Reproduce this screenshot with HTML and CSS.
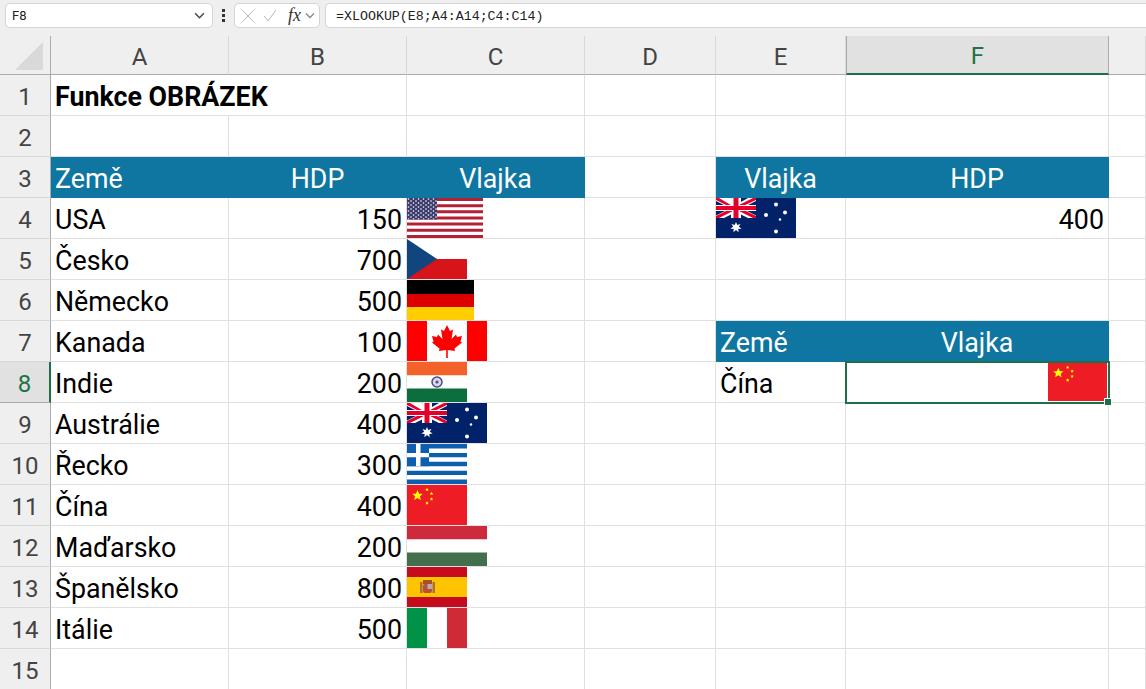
FILE: index.html
```html
<!DOCTYPE html>
<html lang="cs">

<head>
    <meta charset="utf-8">
    <meta name="viewport" content="width=device-width, initial-scale=1.0">
    <title>Funkce OBRÁZEK</title>
    <link rel="stylesheet" href="styles.css">
</head>

<body>
    <!-- flags used more than once -->
    <svg class="defs" aria-hidden="true">
        <symbol id="star" viewBox="-10 -10 20 20">
            <polygon points="0,-10 2.9,-3.1 9.5,-3.1 4.5,1.5 5.9,8.1 0,4.5 -5.9,8.1 -4.5,1.5 -9.5,-3.1 -2.9,-3.1" fill="#ffff00" />
        </symbol>
        <symbol id="au" viewBox="0 0 80 40" preserveAspectRatio="none">
            <rect width="80" height="40" fill="#012169" />
            <rect width="40" height="20" fill="#fff" />
            <path d="M3 0H0V2L15 9.500H19ZM37 0L21 8V9.500H24L40 2V0ZM0 18V20H3L19 12V10.500H15ZM40 18L25 10.500H21V12L37 20H40Z" fill="#e4002b" />
            <path d="M8 0H15L20 2.500V0H20ZM0 3L11 8.500H0ZM40 3V8.500H29ZM32 0H25V4ZM0 12H11L0 17.500ZM40 12V17.500L29 12ZM15 20H8L15 16.500ZM25 20V16.500L32 20Z" fill="#012169" />
            <rect x="16" width="8" height="20" fill="#fff" />
            <rect y="7" width="40" height="6" fill="#fff" />
            <rect x="17.500" width="5" height="20" fill="#e4002b" />
            <rect y="8" width="40" height="4" fill="#e4002b" />
            <polygon points="20,24 21.300,27 24.500,25.900 22.800,28.800 25.700,30.500 22.300,31 22.600,34.300 20,32 17.400,34.300 17.700,31 14.300,30.500 17.200,28.800 15.500,25.900 18.700,27" fill="#fff" />
            <circle cx="60" cy="6.500" r="2" fill="#fff" />
            <circle cx="50" cy="17" r="2" fill="#fff" />
            <circle cx="69" cy="14.500" r="2" fill="#fff" />
            <circle cx="64" cy="21.500" r="1.200" fill="#fff" />
            <circle cx="60" cy="33.500" r="2" fill="#fff" />
        </symbol>
        <symbol id="cn" viewBox="0 0 60 40" preserveAspectRatio="none">
            <rect width="60" height="40" fill="#ee1c25" />
            <use href="#star" x="5" y="5" width="11" height="11" />
            <use href="#star" x="18" y="2.500" width="4" height="4" />
            <use href="#star" x="22.500" y="6.500" width="4" height="4" />
            <use href="#star" x="22.500" y="12" width="4" height="4" />
            <use href="#star" x="18" y="16" width="4" height="4" />
        </symbol>
    </svg>

    <div class="formula-bar">
        <div class="name-box">
            <span>F8</span>
            <svg class="chevron" viewBox="0 0 10 6"><path d="M1 1l4 4 4-4" /></svg>
        </div>
        <div class="grip"><i></i><i></i><i></i></div>
        <div class="fx-box">
            <svg class="fx-icon" viewBox="0 0 14 14"><path d="M1 1l12 12M13 1L1 13" /></svg>
            <svg class="fx-icon" viewBox="0 0 14 14"><path d="M1 7l4 5 8-11" /></svg>
            <span class="fx">fx</span>
            <svg class="chevron small" viewBox="0 0 10 6"><path d="M1 1l4 4 4-4" /></svg>
        </div>
        <div class="formula">=XLOOKUP(E8;A4:A14;C4:C14)</div>
    </div>

    <table class="sheet">
        <colgroup>
            <col class="c-row"><col class="c-abc"><col class="c-abc"><col class="c-abc">
            <col class="c-d"><col class="c-e"><col class="c-f"><col class="c-g">
        </colgroup>
        <thead>
            <tr>
                <th class="corner"><span class="triangle"></span></th>
                <th>A</th><th>B</th><th>C</th><th>D</th><th>E</th><th class="active">F</th><th></th>
            </tr>
        </thead>
        <tbody>
            <tr><th>1</th><td class="title" colspan="2">Funkce OBRÁZEK</td><td></td><td></td><td></td><td></td><td></td></tr>
            <tr><th>2</th><td></td><td></td><td></td><td></td><td></td><td></td><td></td></tr>
            <tr><th>3</th><td class="head">Země</td><td class="head mid">HDP</td><td class="head mid">Vlajka</td><td></td><td class="head mid">Vlajka</td><td class="head mid">HDP</td><td></td></tr>
            <tr>
                <th>4</th><td>USA</td><td class="num">150</td>
                <td class="pic">
                    <svg class="flag w76" viewBox="0 0 76 40" preserveAspectRatio="none">
                        <defs>
                            <pattern id="dots" width="5" height="4" patternUnits="userSpaceOnUse"><circle cx="1.500" cy="1" r=".8" fill="#fff" /><circle cx="4" cy="3" r=".8" fill="#fff" /></pattern>
                        </defs>
                        <rect width="76" height="40" fill="#fff" />
                        <path d="M0 0h76v3H0zM0 6.200h76v3H0zM0 12.300h76v3H0zM0 18.500h76v3H0zM0 24.600h76v3H0zM0 30.800h76v3H0zM0 36.900h76V40H0z" fill="#b22234" />
                        <rect width="30" height="21.500" fill="#3c3b6e" />
                        <rect width="30" height="21.500" fill="url(#dots)" />
                    </svg>
                </td>
                <td></td>
                <td class="pic"><svg class="flag w80"><use href="#au" width="80" height="40" /></svg></td>
                <td class="num">400</td><td></td>
            </tr>
            <tr>
                <th>5</th><td>Česko</td><td class="num">700</td>
                <td class="pic">
                    <svg class="flag w60" viewBox="0 0 60 40" preserveAspectRatio="none">
                        <rect width="60" height="20" fill="#fff" />
                        <rect y="20" width="60" height="20" fill="#d7141a" />
                        <polygon points="0,0 30,20 0,40" fill="#11457e" />
                    </svg>
                </td>
                <td></td><td></td><td></td><td></td>
            </tr>
            <tr>
                <th>6</th><td>Německo</td><td class="num">500</td>
                <td class="pic">
                    <svg class="flag w67" viewBox="0 0 67 40" preserveAspectRatio="none">
                        <rect width="67" height="14" fill="#000" />
                        <rect y="14" width="67" height="13" fill="#dd0000" />
                        <rect y="27" width="67" height="13" fill="#ffce00" />
                    </svg>
                </td>
                <td></td><td></td><td></td><td></td>
            </tr>
            <tr>
                <th>7</th><td>Kanada</td><td class="num">100</td>
                <td class="pic">
                    <svg class="flag w80" viewBox="0 0 80 40" preserveAspectRatio="none">
                        <rect width="80" height="40" fill="#f00" />
                        <rect x="20" width="40" height="40" fill="#fff" />
                        <polygon points="40,4 43,10 46,8.500 44.500,18 49,13.500 50,16 55,15 53.500,20.500 55,21.500 47.500,27.500 48,30 40.800,29 40.800,37 39.200,37 39.200,29 32,30 32.500,27.500 25,21.500 26.500,20.500 25,15 30,16 31,13.500 35.500,18 34,8.500 37,10" fill="#f00" />
                    </svg>
                </td>
                <td></td><td class="head">Země</td><td class="head mid">Vlajka</td><td></td>
            </tr>
            <tr>
                <th class="active">8</th><td>Indie</td><td class="num">200</td>
                <td class="pic">
                    <svg class="flag w60" viewBox="0 0 60 40" preserveAspectRatio="none">
                        <rect width="60" height="13.500" fill="#f4622b" />
                        <rect y="13.500" width="60" height="13" fill="#fff" />
                        <rect y="26.500" width="60" height="13.500" fill="#0b6e3c" />
                        <circle cx="30" cy="20" r="5" fill="#d8d8e8" stroke="#4a4a85" stroke-width="1.500" />
                        <circle cx="30" cy="20" r="1.500" fill="#4a4a85" />
                    </svg>
                </td>
                <td></td><td>Čína</td>
                <td class="selected">
                    <svg class="flag w60 sel-flag"><use href="#cn" width="59" height="38" /></svg>
                    <span class="handle"></span>
                </td>
                <td></td>
            </tr>
            <tr>
                <th>9</th><td>Austrálie</td><td class="num">400</td>
                <td class="pic"><svg class="flag w80"><use href="#au" width="80" height="40" /></svg></td>
                <td></td><td></td><td></td><td></td>
            </tr>
            <tr>
                <th>10</th><td>Řecko</td><td class="num">300</td>
                <td class="pic">
                    <svg class="flag w60" viewBox="0 0 60 40" preserveAspectRatio="none">
                        <rect width="60" height="40" fill="#0d5eaf" />
                        <path d="M0 4.400h60v4.500H0zM0 13.300h60v4.500H0zM0 22.200h60v4.500H0zM0 31.100h60v4.500H0z" fill="#fff" />
                        <rect width="22" height="22.200" fill="#0d5eaf" />
                        <path d="M9 0h4.500v22.200H9zM0 8.900h22v4.400H0z" fill="#fff" />
                    </svg>
                </td>
                <td></td><td></td><td></td><td></td>
            </tr>
            <tr>
                <th>11</th><td>Čína</td><td class="num">400</td>
                <td class="pic"><svg class="flag w60"><use href="#cn" width="60" height="40" /></svg></td>
                <td></td><td></td><td></td><td></td>
            </tr>
            <tr>
                <th>12</th><td>Maďarsko</td><td class="num">200</td>
                <td class="pic">
                    <svg class="flag w80" viewBox="0 0 80 40" preserveAspectRatio="none">
                        <rect width="80" height="13.500" fill="#cd2a3e" />
                        <rect y="13.500" width="80" height="13" fill="#fff" />
                        <rect y="26.500" width="80" height="13.500" fill="#436f4d" />
                    </svg>
                </td>
                <td></td><td></td><td></td><td></td>
            </tr>
            <tr>
                <th>13</th><td>Španělsko</td><td class="num">800</td>
                <td class="pic">
                    <svg class="flag w60" viewBox="0 0 60 40" preserveAspectRatio="none">
                        <rect width="60" height="40" fill="#c60b1e" />
                        <rect y="10" width="60" height="20" fill="#ffc400" />
                        <rect x="13" y="15" width="2.500" height="11" fill="#a8703c" />
                        <rect x="25.500" y="15" width="2.500" height="11" fill="#a8703c" />
                        <rect x="16" y="17" width="9" height="9" rx="2" fill="#b5503a" />
                        <rect x="20.500" y="17" width="4.500" height="5" fill="#b8a8b0" />
                        <rect x="16" y="13" width="9" height="4" fill="#a8502c" />
                    </svg>
                </td>
                <td></td><td></td><td></td><td></td>
            </tr>
            <tr>
                <th>14</th><td>Itálie</td><td class="num">500</td>
                <td class="pic">
                    <svg class="flag w60" viewBox="0 0 60 40" preserveAspectRatio="none">
                        <rect width="20" height="40" fill="#009246" />
                        <rect x="20" width="20" height="40" fill="#fff" />
                        <rect x="40" width="20" height="40" fill="#ce2b37" />
                    </svg>
                </td>
                <td></td><td></td><td></td><td></td>
            </tr>
            <tr><th>15</th><td></td><td></td><td></td><td></td><td></td><td></td><td></td></tr>
        </tbody>
    </table>
</body>

</html>
```

FILE: styles.css
```css
* {
    box-sizing: border-box;
}

html,
body {
    margin: 0;
    height: 689px;
    overflow: hidden;
    background: #fff;
}

body {
    font-family: "Roboto", "Liberation Sans", sans-serif;
    color: #000;
}

.defs {
    display: none;
}

/* formula bar */

.formula-bar {
    display: flex;
    align-items: stretch;
    height: 36px;
    padding: 3px 0 8px 5px;
    background: #efefef;
}

.name-box {
    display: flex;
    align-items: center;
    justify-content: space-between;
    width: 208px;
    padding: 0 7px 0 6px;
    background: #fff;
    border: 1px solid #d4d4d4;
    border-radius: 5px;
    font-size: 13px;
    color: #222;
}

.chevron {
    width: 11px;
    height: 7px;
    fill: none;
    stroke: #444;
    stroke-width: 1.300;
}

.chevron.small {
    width: 10px;
    stroke: #888;
}

.grip {
    display: flex;
    flex-direction: column;
    justify-content: center;
    gap: 2px;
    width: 21px;
    padding-left: 9px;
}

.grip i {
    display: block;
    width: 3px;
    height: 3px;
    background: #333;
}

.fx-box {
    display: flex;
    align-items: center;
    width: 86px;
    padding: 0 2px 0 6px;
    background: #fff;
    border: 1px solid #d4d4d4;
    border-radius: 5px;
}

.fx-icon {
    width: 14px;
    height: 14px;
    margin-right: 8px;
    fill: none;
    stroke: #b5b5b5;
    stroke-width: 1;
}

.fx {
    margin: 0 4px 0 3px;
    font-family: "Liberation Serif", serif;
    font-style: italic;
    font-size: 18px;
    color: #333;
}

.formula {
    flex: 1;
    margin-left: 5px;
    padding: 5px 0 0 10px;
    background: #fff;
    border: 1px solid #d4d4d4;
    border-right: 0;
    border-radius: 5px 0 0 5px;
    font-family: "Liberation Mono", monospace;
    font-size: 13.300px;
    color: #222;
}

/* sheet */

.sheet {
    width: 1146px;
    table-layout: fixed;
    border-collapse: separate;
    border-spacing: 0;
}

.c-row {
    width: 51px;
}

.c-abc {
    width: 178px;
}

.c-d {
    width: 131px;
}

.c-e {
    width: 130px;
}

.c-f {
    width: 263px;
}

.c-g {
    width: 37px;
}

th {
    padding: 0;
    background: #efefef;
    font-weight: 400;
    font-size: 24px;
    color: #444;
}

thead th {
    height: 39px;
    padding-top: 3px;
    border-bottom: 1px solid #ababab;
    border-right: 1px solid #d8d8d8;
}

tbody th {
    padding-top: 3px;
    border-right: 1px solid #ababab;
    border-bottom: 1px solid #d8d8d8;
}

thead .corner {
    position: relative;
    border-right-color: #ababab;
}

.triangle {
    position: absolute;
    right: 7px;
    bottom: 4px;
    border-style: solid;
    border-width: 0 0 28px 28px;
    border-color: transparent transparent #d9d9d9 transparent;
}

thead th.active {
    background: #e1e1e1;
    color: #217346;
    border-bottom: 2px solid #1e6f49;
    border-left: 1px solid #ababab;
    border-right-color: #ababab;
}

tbody th.active {
    background: #e1e1e1;
    color: #217346;
    border-right: 2px solid #1e6f49;
    border-bottom-color: #ababab;
}

td {
    height: 41px;
    padding: 3px 4px 0 4px;
    border-right: 1px solid #e0e0e0;
    border-bottom: 1px solid #e0e0e0;
    font-size: 26.800px;
    line-height: 36px;
    white-space: nowrap;
}

.title {
    font-weight: 700;
}

.head {
    background: #0e76a0;
    color: #fff;
    border-color: #0e76a0;
}

.mid {
    text-align: center;
}

.num {
    text-align: right;
}

.pic {
    padding: 0;
    vertical-align: top;
}

.flag {
    display: block;
    height: 40px;
}

.w60 {
    width: 60px;
}

.w67 {
    width: 67px;
}

.w76 {
    width: 76px;
}

.w80 {
    width: 80px;
}

.selected {
    position: relative;
    padding: 0;
    outline: 2px solid #1e6f49;
    outline-offset: -1px;
}

.sel-flag {
    height: 38px;
    margin-left: auto;
    margin-right: 0;
}

.handle {
    position: absolute;
    right: -3px;
    bottom: -3px;
    width: 6px;
    height: 6px;
    background: #1e6f49;
    border: 1px solid #fff;
    box-sizing: content-box;
    margin: -1px;
}
```
